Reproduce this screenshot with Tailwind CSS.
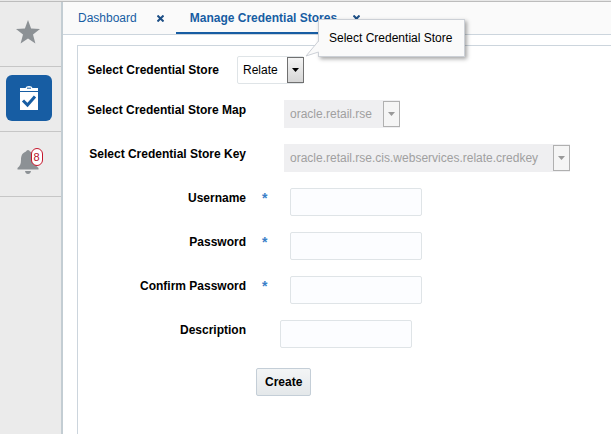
<!DOCTYPE html>
<html lang="en">

<head>
    <meta charset="UTF-8">
    <meta name="viewport" content="width=device-width, initial-scale=1.0">
    <title>Manage Credential Stores</title>
    <script src="https://cdn.jsdelivr.net/npm/@tailwindcss/browser@4"></script>
</head>

<body class="bg-white min-h-screen flex flex-col overflow-hidden font-['Liberation_Sans',Arial,sans-serif] text-xs text-black">
    <div class="h-[2px] bg-[#e8e8e8] border-b border-[#bcbcbc]"></div>
    <div class="flex flex-1">
        <!-- Sidebar -->
        <nav class="w-[63px] shrink-0 bg-[#ebebeb] border-r-2 border-[#c3cdd3]">
            <a href="#" aria-label="Favorites" class="flex h-[65px] items-center justify-center pr-1.5 pb-1 border-b border-[#c6c6c6]">
                <svg class="size-6" viewBox="0 0 24 24" fill="#8c9195">
                    <path d="M12 0l3.1 8.6 8.9.3-7 5.6 2.4 9L12 18.4l-7.4 5.1 2.4-9-7-5.6 8.9-.3z" />
                </svg>
            </a>
            <a href="#" aria-label="Tasks" class="flex h-[65px] items-center justify-center pr-1 pb-0.5 border-b border-[#c6c6c6]">
                <span class="flex size-[46px] items-center justify-center rounded-md bg-[#175da3]">
                    <svg class="h-6 w-[18px]" viewBox="0 0 18 24">
                        <path d="M0 6h18v18H0zM0 2h5.500q.5-2 3.500-2t3.500 2H18v3H0z" fill="#fff" />
                        <path d="M7 2.200h4" stroke="#175da3" />
                        <path d="M3 14.500l4.500 4.500L15 10.500" fill="none" stroke="#175da3" stroke-width="3" />
                    </svg>
                </span>
            </a>
            <a href="#" aria-label="Notifications" class="flex h-[65px] items-center justify-center pr-1.5 pb-1 border-b border-[#c6c6c6]">
                <span class="relative">
                    <svg class="h-6 w-[22px]" viewBox="0 0 22 24" fill="#8c9195">
                        <path d="M11 0q1.500 0 2 1.500C17 3 18 6 18 10c0 4 1 6 3.500 8v1.500H.5V18C3 16 4 14 4 10c0-4 1-7 5-8.500Q9.500 0 11 0zM8 21h6q-.5 3-3 3t-3-3z" />
                    </svg>
                    <span class="absolute -top-0.5 left-3.5 flex h-[18px] w-3 items-center justify-center rounded-full border border-[#c4162c] bg-white text-[11px] text-[#b5122b]">8</span>
                </span>
            </a>
        </nav>

        <main class="flex min-w-0 flex-1 flex-col">
            <!-- Tabs -->
            <div class="flex h-[33px] bg-[#fafafa] border-b border-[#ccd5dd] text-[#175da3]">
                <div class="flex items-center gap-5 pl-[15px] pr-3">
                    <a href="#">Dashboard</a>
                    <button type="button" aria-label="Close Dashboard">
                        <svg class="size-[7px]" viewBox="0 0 7 7" stroke="#1d4f86" stroke-width="2"><path d="M.5.5l6 6M6.500.5l-6 6" /></svg>
                    </button>
                </div>
                <div class="flex items-center gap-4 border-b-2 border-[#175da3] px-3.5 pt-0.5">
                    <a href="#" class="font-bold">Manage Credential Stores</a>
                    <button type="button" aria-label="Close Manage Credential Stores">
                        <svg class="size-[7px]" viewBox="0 0 7 7" stroke="#1d4f86" stroke-width="2"><path d="M.5.5l6 6M6.500.5l-6 6" /></svg>
                    </button>
                </div>
            </div>

            <form class="mt-2.5 ml-3.5 flex flex-1 flex-col gap-4 border-t border-l border-[#ccd5dd] pt-2.5">
                <div class="flex">
                    <label for="store" class="w-[141px] pt-1.5 text-right font-bold">Select Credential Store</label>
                    <div class="relative ml-[18px]">
                        <select id="store" class="h-7 min-w-[67px] appearance-none rounded-xs border border-[#dfe4e7] bg-white pl-[5px] pr-6">
                            <option>Relate</option>
                        </select>
                        <span class="pointer-events-none absolute top-px right-0 flex h-[26px] w-[17px] items-center justify-center border border-[#707070] bg-linear-to-b from-[#f4f4f4] to-[#d6d6d6]">
                            <svg class="h-1 w-[7px]" viewBox="0 0 7 4"><path d="M0 0h7L3.500 4z" /></svg>
                        </span>
                        <!-- Tooltip -->
                        <div role="tooltip" class="absolute -top-[37px] left-[81px] border border-[#ccd0d6] bg-[#fafafa] py-2.5 pl-2.5 pr-3 leading-4 whitespace-nowrap shadow-[2px_2px_4px_rgba(0,0,0,0.35)]">
                            Select Credential Store
                            <svg class="absolute top-[21px] -left-[14px] h-4 w-3.5" viewBox="0 0 14 16">
                                <path d="M14 0L1 15l13-4z" fill="#fafafa" />
                                <path d="M13.500 0L1 15l12.500-4" fill="none" stroke="#ccd0d6" />
                            </svg>
                        </div>
                    </div>
                </div>

                <div class="flex">
                    <label for="map" class="w-[168px] pt-0.5 text-right font-bold">Select Credential Store Map</label>
                    <div class="relative ml-[38px]">
                        <select id="map" disabled class="h-7 min-w-[116px] appearance-none bg-[#efeff1] pl-1.5 pr-6 text-[#a0a0a0] opacity-100">
                            <option>oracle.retail.rse</option>
                        </select>
                        <span class="pointer-events-none absolute top-px right-0 flex h-[26px] w-[17px] items-center justify-center border border-[#b0b0b0] bg-[#f5f5f5]">
                            <svg class="h-1 w-[7px]" viewBox="0 0 7 4" fill="#999"><path d="M0 0h7L3.500 4z" /></svg>
                        </span>
                    </div>
                </div>

                <div class="flex">
                    <label for="key" class="w-[168px] pt-0.5 text-right font-bold">Select Credential Store Key</label>
                    <div class="relative ml-[38px]">
                        <select id="key" disabled class="h-7 min-w-[286px] appearance-none bg-[#efeff1] pl-1.5 pr-6 text-[#a0a0a0] opacity-100">
                            <option>oracle.retail.rse.cis.webservices.relate.credkey</option>
                        </select>
                        <span class="pointer-events-none absolute top-px right-0 flex h-[26px] w-[17px] items-center justify-center border border-[#b0b0b0] bg-[#f5f5f5]">
                            <svg class="h-1 w-[7px]" viewBox="0 0 7 4" fill="#999"><path d="M0 0h7L3.500 4z" /></svg>
                        </span>
                    </div>
                </div>

                <div class="flex">
                    <label for="username" class="w-[168px] pt-0.5 text-right font-bold">Username</label>
                    <span class="w-11 pl-4 text-sm font-bold text-[#3a7fc8]">*</span>
                    <input id="username" type="text" required class="h-7 w-[132px] rounded-xs border border-[#dfe4e7] bg-[#fcfdff] px-1.5">
                </div>

                <div class="flex">
                    <label for="password" class="w-[168px] pt-0.5 text-right font-bold">Password</label>
                    <span class="w-11 pl-4 text-sm font-bold text-[#3a7fc8]">*</span>
                    <input id="password" type="password" required class="h-7 w-[132px] rounded-xs border border-[#dfe4e7] bg-[#fcfdff] px-1.5">
                </div>

                <div class="flex">
                    <label for="confirm" class="w-[168px] pt-0.5 text-right font-bold">Confirm Password</label>
                    <span class="w-11 pl-4 text-sm font-bold text-[#3a7fc8]">*</span>
                    <input id="confirm" type="password" required class="h-7 w-[132px] rounded-xs border border-[#dfe4e7] bg-[#fcfdff] px-1.5">
                </div>

                <div class="flex">
                    <label for="description" class="w-[168px] pt-0.5 text-right font-bold">Description</label>
                    <input id="description" type="text" class="ml-[34px] h-7 w-[132px] rounded-xs border border-[#dfe4e7] bg-[#fcfdff] px-1.5">
                </div>

                <div class="mt-1 pl-[178px]">
                    <button type="button" class="h-7 rounded-xs border border-[#c4ced7] bg-linear-to-b from-[#f3f5f6] to-[#e4e8ea] px-2 font-bold">Create</button>
                </div>
            </form>
        </main>
    </div>
</body>

</html>
